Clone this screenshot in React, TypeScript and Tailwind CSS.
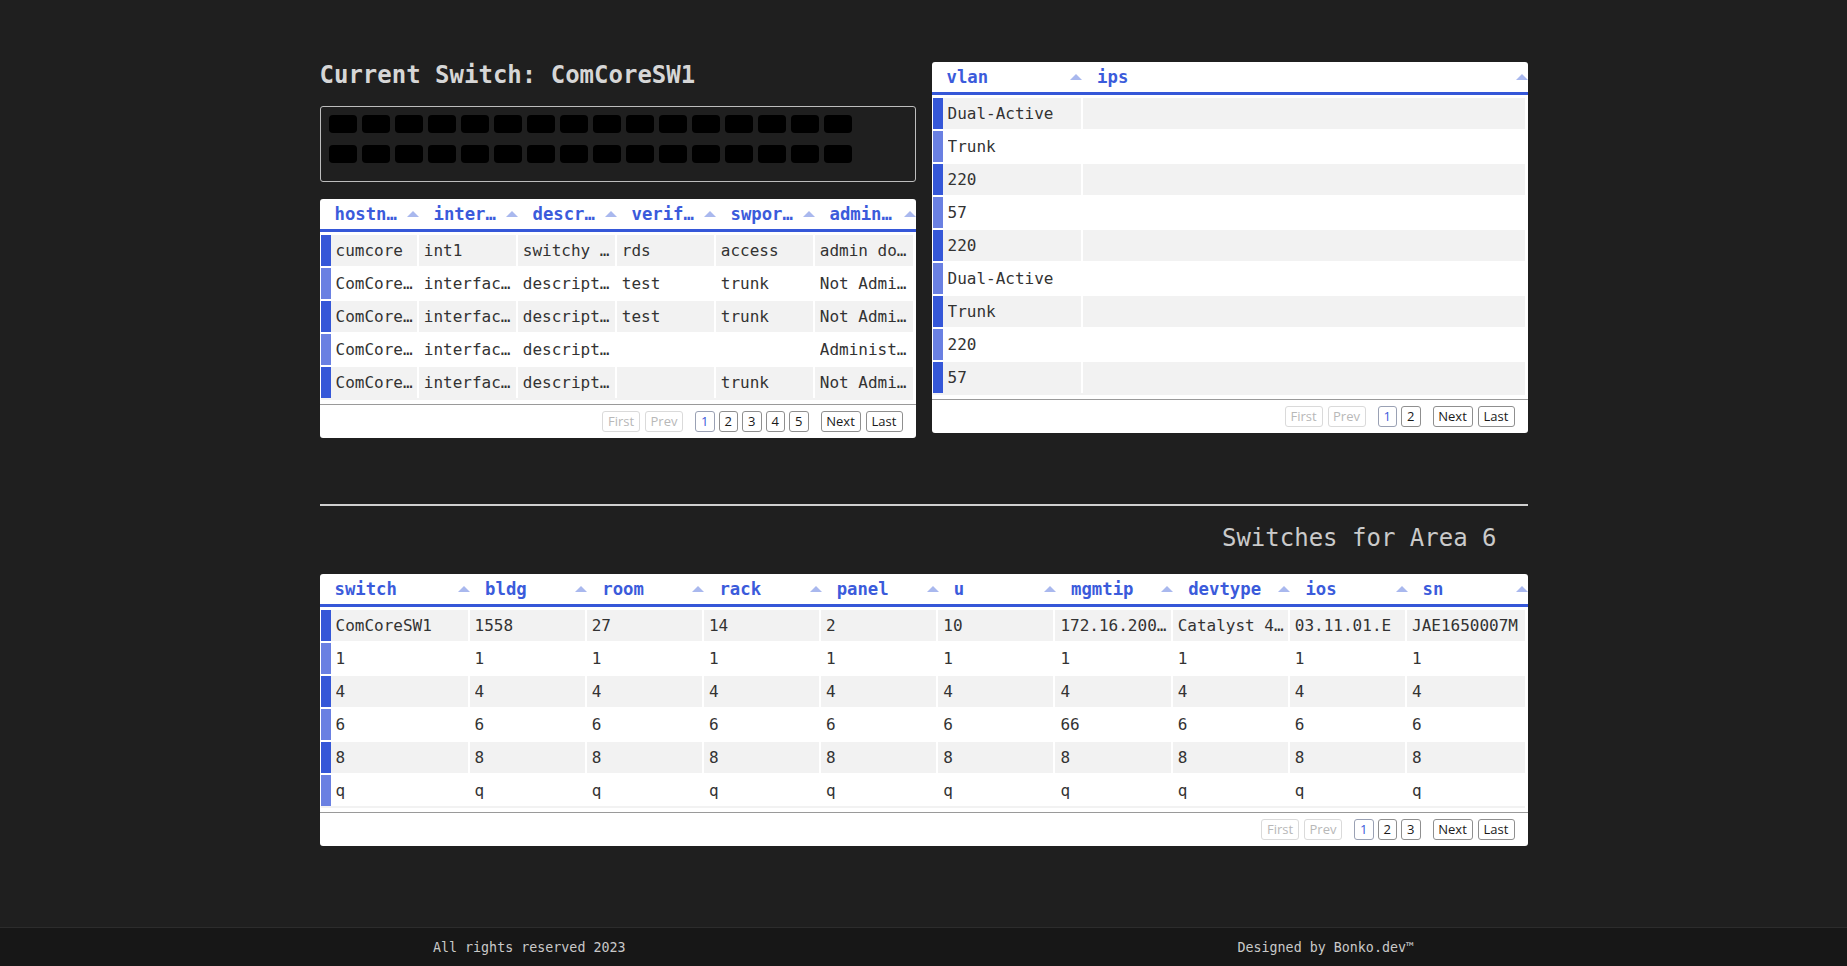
import React from "react";

const MONO = "font-['DejaVu_Sans_Mono',monospace]";

type Col = { label: string; hw: string; bw: string };

function SortArrow() {
  return (
    <span className="block w-0 h-0 shrink-0 border-x-[6px] border-x-transparent border-b-[6px] border-b-[#a9b8ee]" />
  );
}

function PagerButton({
  children,
  w,
  kind,
}: {
  children: React.ReactNode;
  w: string;
  kind: "disabled" | "active" | "normal";
}) {
  const cls =
    kind === "disabled"
      ? "border-[#dadada] text-[#b8b8b8]"
      : kind === "active"
      ? "border-[#9aa1b4] text-[#3b5bdb]"
      : "border-[#8f8f8f] text-[#1a1a1a]";
  return (
    <span
      className={`${w} h-[21px] flex items-center justify-center border rounded-[3px] bg-white leading-none ${cls}`}
    >
      {children}
    </span>
  );
}

function Pager({ pages }: { pages: number }) {
  const nums = Array.from({ length: pages }, (_, i) => i + 1);
  return (
    <div className="flex justify-end items-center pr-[13px] pt-[6px] pb-[6px] font-['Open_Sans',sans-serif] text-[13px]">
      <div className="flex gap-[5px]">
        <PagerButton w="w-[38px]" kind="disabled">
          First
        </PagerButton>
        <PagerButton w="w-[38px]" kind="disabled">
          Prev
        </PagerButton>
      </div>
      <div className="flex gap-[4px] ml-[12px]">
        {nums.map((n) => (
          <PagerButton key={n} w="w-[19.5px]" kind={n === 1 ? "active" : "normal"}>
            {n}
          </PagerButton>
        ))}
      </div>
      <div className="flex gap-[5px] ml-[12px]">
        <PagerButton w="w-[40px]" kind="normal">
          Next
        </PagerButton>
        <PagerButton w="w-[37px]" kind="normal">
          Last
        </PagerButton>
      </div>
    </div>
  );
}

function DataTable({
  cols,
  rows,
  pages,
  className,
}: {
  cols: Col[];
  rows: string[][];
  pages: number;
  className?: string;
}) {
  return (
    <div className={`bg-white rounded-[3px] overflow-hidden ${MONO} ${className ?? ""}`}>
      <div className="flex h-[30px]">
        {cols.map((c, i) => (
          <div key={i} className={`${c.hw} flex items-center h-full pl-[15px] min-w-0`}>
            <span className="flex-1 min-w-0 truncate pr-[6px] leading-[28px] text-[17.3px] font-bold text-[#3b5bdb]">
              {c.label}
            </span>
            <SortArrow />
          </div>
        ))}
      </div>
      <div className="h-[3px] bg-[#3557d8]" />
      <div className="pt-[3px] flex flex-col gap-[2px]">
        {rows.map((r, ri) => {
          const odd = ri % 2 === 0;
          return (
            <div key={ri} className="flex h-[31px] gap-[2px] pl-[1px] pr-[3px]">
              {r.map((cell, ci) => (
                <div
                  key={ci}
                  className={`${cols[ci].bw} min-w-0 h-full flex items-center pl-[5px] pr-[3px] text-[16px] text-[#333] ${
                    odd ? "bg-[#f2f2f2]" : "bg-white"
                  } ${
                    ci === 0
                      ? odd
                        ? "border-l-[10px] border-l-[#3557d8]"
                        : "border-l-[10px] border-l-[#6a80e2]"
                      : ""
                  }`}
                >
                  <span className="block truncate whitespace-pre">{cell}</span>
                </div>
              ))}
            </div>
          );
        })}
      </div>
      <div className="h-[2px] bg-[#f2f2f2] ml-[1px] mr-[3px]" />
      <div className="mt-[4px] h-[1px] bg-[#9a9a9a]" />
      <Pager pages={pages} />
    </div>
  );
}

const leftCols: Col[] = [
  { label: "hostname", hw: "w-[99px]", bw: "w-[96.3px]" },
  { label: "interface", hw: "w-[99px]", bw: "w-[97px]" },
  { label: "description", hw: "w-[99px]", bw: "w-[97px]" },
  { label: "verified", hw: "w-[99px]", bw: "w-[97px]" },
  { label: "swportmode", hw: "w-[99px]", bw: "w-[97px]" },
  { label: "adminstatus", hw: "flex-1", bw: "flex-1" },
];

const leftRows: string[][] = [
  ["cumcore", "int1", "switchy mcswitchface", "rds", "access", "admin down"],
  [
    "ComCoreSW1",
    "interface GigabitEthernet1/0/1",
    "description Uplink",
    "test",
    "trunk",
    "Not Administratively Down",
  ],
  [
    "ComCoreSW1",
    "interface GigabitEthernet1/0/2",
    "description Uplink",
    "test",
    "trunk",
    "Not Administratively Down",
  ],
  [
    "ComCoreSW1",
    "interface GigabitEthernet1/0/3",
    "description Server",
    "",
    "",
    "Administratively Down",
  ],
  [
    "ComCoreSW1",
    "interface GigabitEthernet1/0/4",
    "description Server",
    "",
    "trunk",
    "Not Administratively Down",
  ],
];

const rightCols: Col[] = [
  { label: "vlan", hw: "w-[150.6px]", bw: "w-[148px]" },
  { label: "ips", hw: "flex-1", bw: "flex-1" },
];

const rightRows: string[][] = [
  ["Dual-Active", ""],
  ["Trunk", ""],
  ["220", ""],
  ["57", ""],
  ["220", ""],
  ["Dual-Active", ""],
  ["Trunk", ""],
  ["220", ""],
  ["57", ""],
];

const mid = "w-[117.2px]";
const midB = "w-[115.2px]";
const bottomCols: Col[] = [
  { label: "switch", hw: "w-[150.6px]", bw: "w-[147px]" },
  { label: "bldg", hw: mid, bw: midB },
  { label: "room", hw: mid, bw: midB },
  { label: "rack", hw: mid, bw: midB },
  { label: "panel", hw: mid, bw: midB },
  { label: "u", hw: mid, bw: midB },
  { label: "mgmtip", hw: mid, bw: midB },
  { label: "devtype", hw: mid, bw: midB },
  { label: "ios", hw: mid, bw: midB },
  { label: "sn", hw: "flex-1", bw: "flex-1" },
];

const fill = (v: string) => Array.from({ length: 10 }, () => v);
const bottomRows: string[][] = [
  [
    "ComCoreSW1",
    "1558",
    "27",
    "14",
    "2",
    "10",
    "172.16.200.10",
    "Catalyst 4500X",
    "03.11.01.E",
    "JAE1650007M",
  ],
  fill("1"),
  fill("4"),
  ["6", "6", "6", "6", "6", "6", "66", "6", "6", "6"],
  fill("8"),
  fill("q"),
];

function SwitchFace() {
  const ports = Array.from({ length: 32 }, (_, i) => i);
  return (
    <div className="mt-[17px] h-[76px] border border-[#bdbdbd] rounded-[3px] pt-[8px] pl-[8px]">
      <div className="grid grid-cols-[repeat(16,28px)] gap-x-[5px] gap-y-[12px]">
        {ports.map((p) => (
          <div key={p} className="w-[28px] h-[18px] bg-black rounded-[4px]" />
        ))}
      </div>
    </div>
  );
}

export default function App() {
  return (
    <div className="min-h-screen bg-[#1f1f1f] flex flex-col">
      <main className="w-[1208px] mx-auto pt-[62px]">
        <div className="flex gap-[16px] items-start">
          <div className="w-[596px]">
            <h1 className={`${MONO} -mt-[1px] text-[24px] leading-[28px] font-bold text-[#d6d6d6]`}>
              Current Switch: ComCoreSW1
            </h1>
            <SwitchFace />
            <DataTable cols={leftCols} rows={leftRows} pages={5} className="mt-[17px]" />
          </div>
          <div className="w-[596px]">
            <DataTable cols={rightCols} rows={rightRows} pages={2} />
          </div>
        </div>
        <div className="mt-[66px] h-[2px] bg-[#cfcfcf]" />
        <h2
          className={`${MONO} mt-[18px] text-right pr-[31px] text-[24px] leading-[28px] font-normal text-[#cacaca]`}
        >
          Switches for Area 6
        </h2>
        <DataTable cols={bottomCols} rows={bottomRows} pages={3} className="mt-[22px]" />
      </main>
      <footer className="mt-auto h-[39px] border-t border-[#2c2c2c] bg-[#171717]">
        <div
          className={`w-[1593px] mx-auto h-full flex justify-around items-center pt-[2px] ${MONO} text-[13.33px] text-[#c9c9c9]`}
        >
          <span>All rights reserved 2023</span>
          <span>Designed by Bonko.dev™</span>
        </div>
      </footer>
    </div>
  );
}
